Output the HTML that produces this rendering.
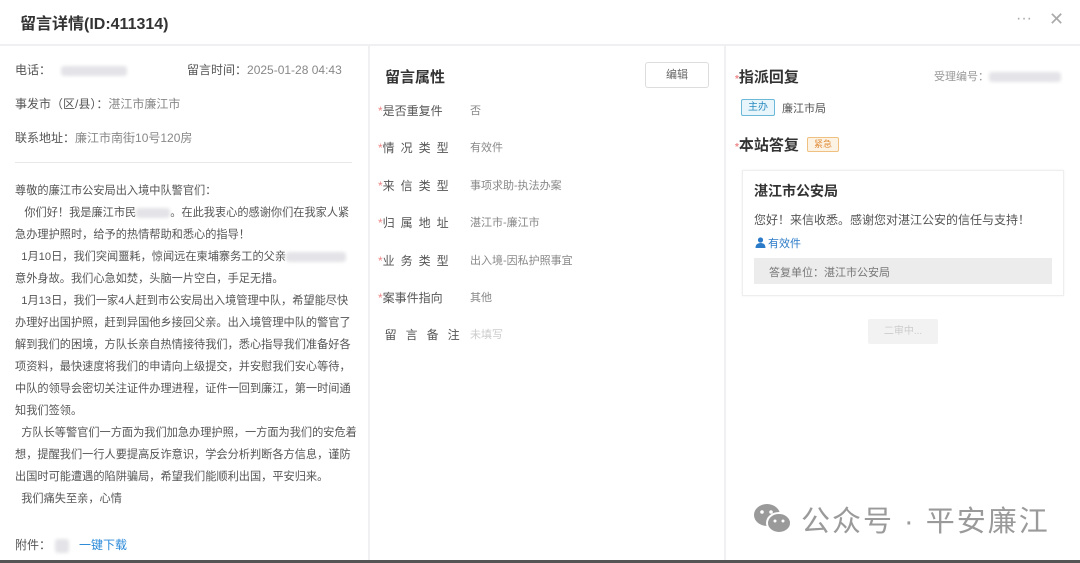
<!DOCTYPE html>
<html><head><meta charset="utf-8"><style>
*{margin:0;padding:0;box-sizing:border-box}
body{width:1080px;height:563px;background:#fff;font-family:"Liberation Sans","Noto Sans CJK SC",sans-serif;color:#555;font-size:12px;position:relative;overflow:hidden}
.abs{position:absolute;white-space:nowrap}
.blur{display:inline-block;background:#e4e4e8;height:10px;border-radius:3px;filter:blur(1.5px);vertical-align:middle}
.g{color:#888}
.attr div{white-space:nowrap;position:relative}
.attr .v{position:absolute;left:92px;top:0;font-size:11px;color:#888}
</style></head><body>
<div class="abs" style="left:20px;top:10px;font-size:16px;font-weight:bold;color:#333">留言详情(ID:411314)</div>
<div class="abs" style="left:1016px;top:10px;font-size:16px;color:#aaa">···</div>
<div class="abs" style="left:1049px;top:9px;font-size:18px;color:#aaa">✕</div>
<div style="position:absolute;left:0;top:44px;width:1080px;height:2px;background:#f0f0f2"></div>
<div style="position:absolute;left:368px;top:46px;width:2px;height:515px;background:#f0f0f2"></div>
<div style="position:absolute;left:724px;top:46px;width:2px;height:515px;background:#f0f0f2"></div>
<div style="position:absolute;left:0;top:560px;width:1080px;height:3px;background:#555"></div>

<div class="abs" style="left:15px;top:61px">电话：<span class="blur" style="width:66px;margin-left:10px"></span></div>
<div class="abs" style="left:187px;top:61px">留言时间：<span class="g">2025-01-28 04:43</span></div>
<div class="abs" style="left:15px;top:95px">事发市（区/县）：<span class="g">湛江市廉江市</span></div>
<div class="abs" style="left:15px;top:129px">联系地址：<span class="g">廉江市南街10号120房</span></div>
<div style="position:absolute;left:15px;top:162px;width:337px;height:1px;background:#e8e8e8"></div>
<div style="position:absolute;left:15px;top:180px;width:345px;line-height:22px;color:#555;font-size:11.2px;white-space:nowrap">
<div>尊敬的廉江市公安局出入境中队警官们：</div>
<div>&nbsp;&nbsp;&nbsp;你们好！我是廉江市民<span class="blur" style="width:34px"></span>。在此我衷心的感谢你们在我家人紧</div>
<div>急办理护照时，给予的热情帮助和悉心的指导！</div>
<div>&nbsp;&nbsp;1月10日，我们突闻噩耗，惊闻远在柬埔寨务工的父亲<span class="blur" style="width:60px"></span></div>
<div>意外身故。我们心急如焚，头脑一片空白，手足无措。</div>
<div>&nbsp;&nbsp;1月13日，我们一家4人赶到市公安局出入境管理中队，希望能尽快</div>
<div>办理好出国护照，赶到异国他乡接回父亲。出入境管理中队的警官了</div>
<div>解到我们的困境，方队长亲自热情接待我们，悉心指导我们准备好各</div>
<div>项资料，最快速度将我们的申请向上级提交，并安慰我们安心等待，</div>
<div>中队的领导会密切关注证件办理进程，证件一回到廉江，第一时间通</div>
<div>知我们签领。</div>
<div>&nbsp;&nbsp;方队长等警官们一方面为我们加急办理护照，一方面为我们的安危着</div>
<div>想，提醒我们一行人要提高反诈意识，学会分析判断各方信息，谨防</div>
<div>出国时可能遭遇的陷阱骗局，希望我们能顺利出国，平安归来。</div>
<div>&nbsp;&nbsp;我们痛失至亲，心情</div>
</div>
<div class="abs" style="left:15px;top:536px">附件：<span class="blur" style="width:14px;height:14px;margin-left:4px"></span><span style="color:#2b8ad8;margin-left:10px">一键下载</span></div>

<div class="abs" style="left:385px;top:66px;font-size:15px;font-weight:bold;color:#333">留言属性</div>
<div class="abs" style="left:645px;top:62px;width:64px;height:26px;border:1px solid #ddd;border-radius:3px;text-align:center;line-height:24px;color:#666;font-size:11px">编辑</div>
<div class="attr" style="position:absolute;left:378px;top:93px;line-height:37.4px;color:#555">
<div><span style="color:#e88">*</span>是否重复件<span class="v">否</span></div>
<div><span style="color:#e88">*</span><span style="letter-spacing:6px">情况类型</span><span class="v">有效件</span></div>
<div><span style="color:#e88">*</span><span style="letter-spacing:6px">来信类型</span><span class="v">事项求助-执法办案</span></div>
<div><span style="color:#e88">*</span><span style="letter-spacing:6px">归属地址</span><span class="v">湛江市-廉江市</span></div>
<div><span style="color:#e88">*</span><span style="letter-spacing:6px">业务类型</span><span class="v">出入境-因私护照事宜</span></div>
<div><span style="color:#e88">*</span>案事件指向<span class="v">其他</span></div>
<div>&nbsp;&nbsp;<span style="letter-spacing:9px">留言备注</span><span class="v" style="color:#ccc">未填写</span></div>
</div>

<div class="abs" style="left:735px;top:66px;font-size:15px;font-weight:bold;color:#333"><span style="color:#e88;font-size:10px">*</span>指派回复</div>
<div class="abs" style="left:934px;top:68px;color:#999;font-size:11px">受理编号：<span class="blur" style="width:72px"></span></div>
<div class="abs" style="left:741px;top:99px;border:1px solid #6bb8d8;background:#e8f6fb;color:#2a8ac0;font-size:10px;padding:0 6px;line-height:15px;border-radius:2px">主办</div>
<div class="abs" style="left:782px;top:100px;font-size:11px;color:#555">廉江市局</div>
<div class="abs" style="left:735px;top:134px;font-size:15px;font-weight:bold;color:#333"><span style="color:#e88;font-size:10px">*</span>本站答复</div>
<div class="abs" style="left:807px;top:137px;border:1px solid #f0c080;background:#fdf3e4;color:#e09040;font-size:9px;padding:0 6px;line-height:13px;border-radius:2px">紧急</div>
<div style="position:absolute;left:742px;top:170px;width:322px;height:126px;border:1px solid #eee;box-shadow:0 0 3px rgba(0,0,0,.05)"></div>
<div class="abs" style="left:754px;top:181px;font-size:14px;font-weight:bold;color:#333">湛江市公安局</div>
<div class="abs" style="left:754px;top:211px;font-size:12px;color:#555">您好！来信收悉。感谢您对湛江公安的信任与支持！</div>
<svg style="position:absolute;left:755px;top:237px" width="11" height="11" viewBox="0 0 11 11"><circle cx="5.5" cy="3" r="2.6" fill="#2b7bc8"/><path d="M0.5 11 Q0.5 6 5.5 6 Q10.5 6 10.5 11Z" fill="#2b7bc8"/></svg>
<div class="abs" style="left:768px;top:235px;font-size:11px;color:#2b7bc8">有效件</div>
<div style="position:absolute;left:754px;top:258px;width:298px;height:26px;background:#ececec"></div>
<div class="abs" style="left:769px;top:264px;font-size:11px;color:#777">答复单位：湛江市公安局</div>
<div class="abs" style="left:868px;top:319px;width:70px;height:25px;background:#f2f2f2;color:#ccc;font-size:10px;text-align:center;line-height:25px;border-radius:2px">二审中...</div>

<svg style="position:absolute;left:752px;top:502px" width="42" height="34" viewBox="0 0 42 34">
<ellipse cx="15" cy="13" rx="13" ry="11" fill="#9a9a9a"/>
<ellipse cx="27" cy="21" rx="12" ry="10" fill="#9a9a9a" stroke="#fff" stroke-width="2"/>
<circle cx="10" cy="10" r="1.8" fill="#fff"/><circle cx="19" cy="10" r="1.8" fill="#fff"/>
<circle cx="23" cy="19" r="1.5" fill="#fff"/><circle cx="31" cy="19" r="1.5" fill="#fff"/>
</svg>
<div class="abs" style="left:801px;top:498px;font-size:29px;color:#9a9a9a;letter-spacing:2px">公众号 · 平安廉江</div>
</body></html>
